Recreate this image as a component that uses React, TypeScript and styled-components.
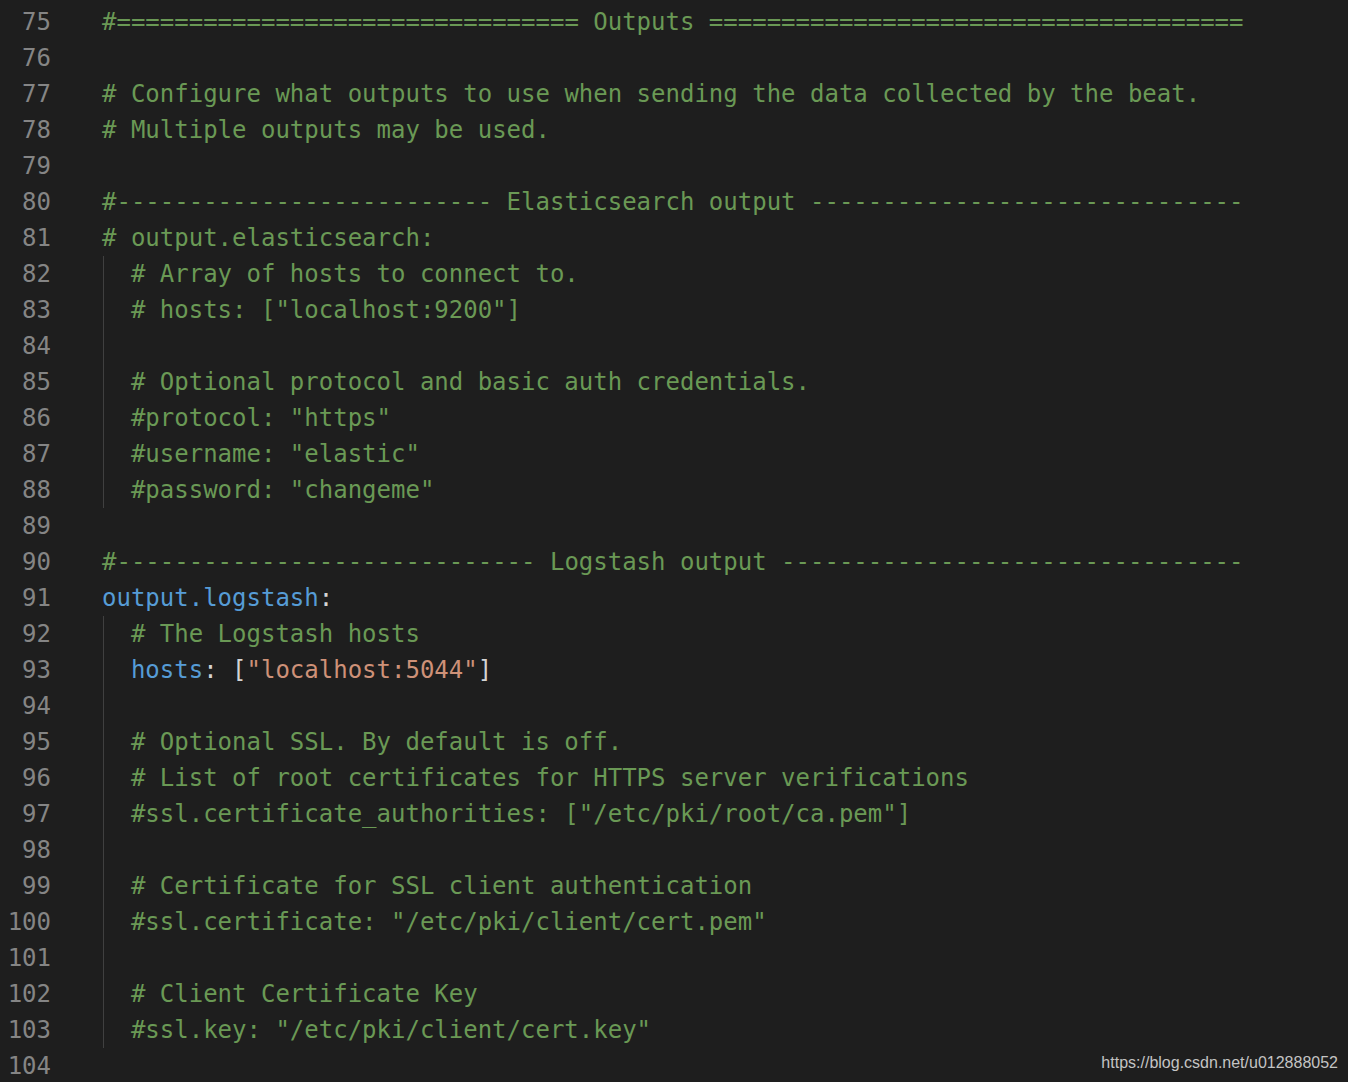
import {FC} from "react";
import styled, {createGlobalStyle} from "styled-components";

type TokenKind = 'comment' | 'key' | 'punct' | 'string';

interface Token {
    kind: TokenKind
    text: string
}

interface CodeLine {
    indent?: boolean
    tokens: Token[]
}

const c = (text: string): Token => ({kind: 'comment', text});
const k = (text: string): Token => ({kind: 'key', text});
const p = (text: string): Token => ({kind: 'punct', text});
const s = (text: string): Token => ({kind: 'string', text});

const rule = (ch: string, left: number, title: string, right: number) =>
    '#' + ch.repeat(left) + ' ' + title + ' ' + ch.repeat(right);

const lines: CodeLine[] = [
    {tokens: [c(rule('=', 32, 'Outputs', 37))]},
    {tokens: []},
    {tokens: [c('# Configure what outputs to use when sending the data collected by the beat.')]},
    {tokens: [c('# Multiple outputs may be used.')]},
    {tokens: []},
    {tokens: [c(rule('-', 26, 'Elasticsearch output', 30))]},
    {tokens: [c('# output.elasticsearch:')]},
    {indent: true, tokens: [c('# Array of hosts to connect to.')]},
    {indent: true, tokens: [c('# hosts: ["localhost:9200"]')]},
    {indent: true, tokens: []},
    {indent: true, tokens: [c('# Optional protocol and basic auth credentials.')]},
    {indent: true, tokens: [c('#protocol: "https"')]},
    {indent: true, tokens: [c('#username: "elastic"')]},
    {indent: true, tokens: [c('#password: "changeme"')]},
    {tokens: []},
    {tokens: [c(rule('-', 29, 'Logstash output', 32))]},
    {tokens: [k('output.logstash'), p(':')]},
    {indent: true, tokens: [c('# The Logstash hosts')]},
    {indent: true, tokens: [k('hosts'), p(': ['), s('"localhost:5044"'), p(']')]},
    {indent: true, tokens: []},
    {indent: true, tokens: [c('# Optional SSL. By default is off.')]},
    {indent: true, tokens: [c('# List of root certificates for HTTPS server verifications')]},
    {indent: true, tokens: [c('#ssl.certificate_authorities: ["/etc/pki/root/ca.pem"]')]},
    {indent: true, tokens: []},
    {indent: true, tokens: [c('# Certificate for SSL client authentication')]},
    {indent: true, tokens: [c('#ssl.certificate: "/etc/pki/client/cert.pem"')]},
    {indent: true, tokens: []},
    {indent: true, tokens: [c('# Client Certificate Key')]},
    {indent: true, tokens: [c('#ssl.key: "/etc/pki/client/cert.key"')]},
    {tokens: []},
];

const FIRST_LINE = 75;

const GlobalStyle = createGlobalStyle`
    html, body {
        margin: 0;
        padding: 0;
        background: #1e1e1e;
        height: 100%;
        overflow: hidden;
    }
`;

const Editor = styled.div`
    position: relative;
    width: 1348px;
    height: 1082px;
    background: #1e1e1e;
    padding-top: 4px;
    box-sizing: border-box;
    font-family: "DejaVu Sans Mono", "Liberation Mono", monospace;
    font-size: 24px;
    line-height: 36px;
    overflow: hidden;
`;

const Row = styled.div`
    display: flex;
    height: 36px;
    white-space: pre;
`;

const Gutter = styled.div`
    width: 51px;
    flex: none;
    text-align: right;
    color: #858585;
`;

const Code = styled.div<{ $indent?: boolean }>`
    margin-left: 51px;
    flex: 1;
    color: #d4d4d4;
    padding-left: ${p => p.$indent ? '28.9px' : '0'};
    background: ${p => p.$indent
        ? 'linear-gradient(#404040, #404040) no-repeat 1px 0 / 1px 100%'
        : 'none'};
`;

const tokenColors: Record<TokenKind, string> = {
    comment: '#6a9955',
    key: '#569cd6',
    punct: '#d4d4d4',
    string: '#ce9178',
};

const Tok = styled.span<{ $kind: TokenKind }>`
    color: ${p => tokenColors[p.$kind]};
`;

const Watermark = styled.div`
    position: absolute;
    right: 10px;
    bottom: 9px;
    font-family: "Liberation Sans", Arial, sans-serif;
    font-size: 16px;
    line-height: 20px;
    color: #c4c4c4;
`;

const App: FC = () => {
    return (
        <Editor>
            <GlobalStyle/>
            {lines.map((line, index) => (
                <Row key={index}>
                    <Gutter>{FIRST_LINE + index}</Gutter>
                    <Code $indent={line.indent}>
                        {line.tokens.map((t, i) => (
                            <Tok key={i} $kind={t.kind}>{t.text}</Tok>
                        ))}
                    </Code>
                </Row>
            ))}
            <Watermark>https://blog.csdn.net/u012888052</Watermark>
        </Editor>
    );
};

export default App;
